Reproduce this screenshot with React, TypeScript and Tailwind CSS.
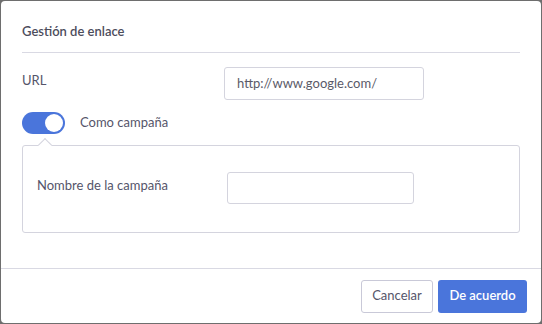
import React from "react";

export default function App() {
  return (
    <div className="w-[542px] h-[324px] bg-[#6e6e6e] pt-px pl-px" style={{ fontFamily: "Lato, 'Noto Sans', sans-serif" }}>
      <div className="w-[540px] h-[322px] bg-white rounded-[4px] flex flex-col">
        <div className="px-[21px] pt-[20px]">
          <div className="text-[13px] font-semibold text-[#4d4d5c] leading-[20px] pb-[11px] border-b border-[#d9d9e3]">Gestión de enlace</div>
        </div>
        <div className="px-[21px] pt-[14px] flex-1">
          <div className="flex items-center h-[33px]">
            <div className="w-[202px] text-[13px] text-[#55556a] -mt-[6px]">URL</div>
            <div className="w-[200px] h-[33px] border border-[#d4d4de] rounded-[3px] flex items-center px-[12px] text-[13px] text-[#5a5a68]">http://www.google.com/</div>
          </div>
          <div className="flex items-center mt-[11px] h-[24px]">
            <div className="w-[43px] h-[22px] rounded-full bg-[#4a75db] relative">
              <div className="absolute right-[2px] top-[2px] w-[18px] h-[18px] rounded-full bg-white" />
            </div>
            <span className="ml-[15px] text-[13px] text-[#55556a]">Como campaña</span>
          </div>
          <div className="relative mt-[10px] h-[88px] border border-[#d4d4de] rounded-[3px] flex items-center pl-[14px]">
            <div className="absolute left-[17px] -top-[6px] w-[10px] h-[10px] bg-white border-l border-t border-[#d4d4de] rotate-45" />
            <div className="w-[190px] text-[13px] text-[#55556a] -mt-[6px]">Nombre de la campaña</div>
            <div className="w-[187px] h-[32px] border border-[#d4d4de] rounded-[3px] -mt-[2px]" />
          </div>
        </div>
        <div className="border-t border-[#d9d9e3] h-[55px] flex items-center justify-end gap-[5px] pr-[14px]">
          <button className="h-[33px] w-[72px] border border-[#c9c9d8] rounded-[3px] bg-white text-[13px] text-[#55556a]">Cancelar</button>
          <button className="h-[33px] w-[89px] rounded-[3px] bg-[#4a75db] text-[13px] font-semibold text-white">De acuerdo</button>
        </div>
      </div>
    </div>
  );
}
